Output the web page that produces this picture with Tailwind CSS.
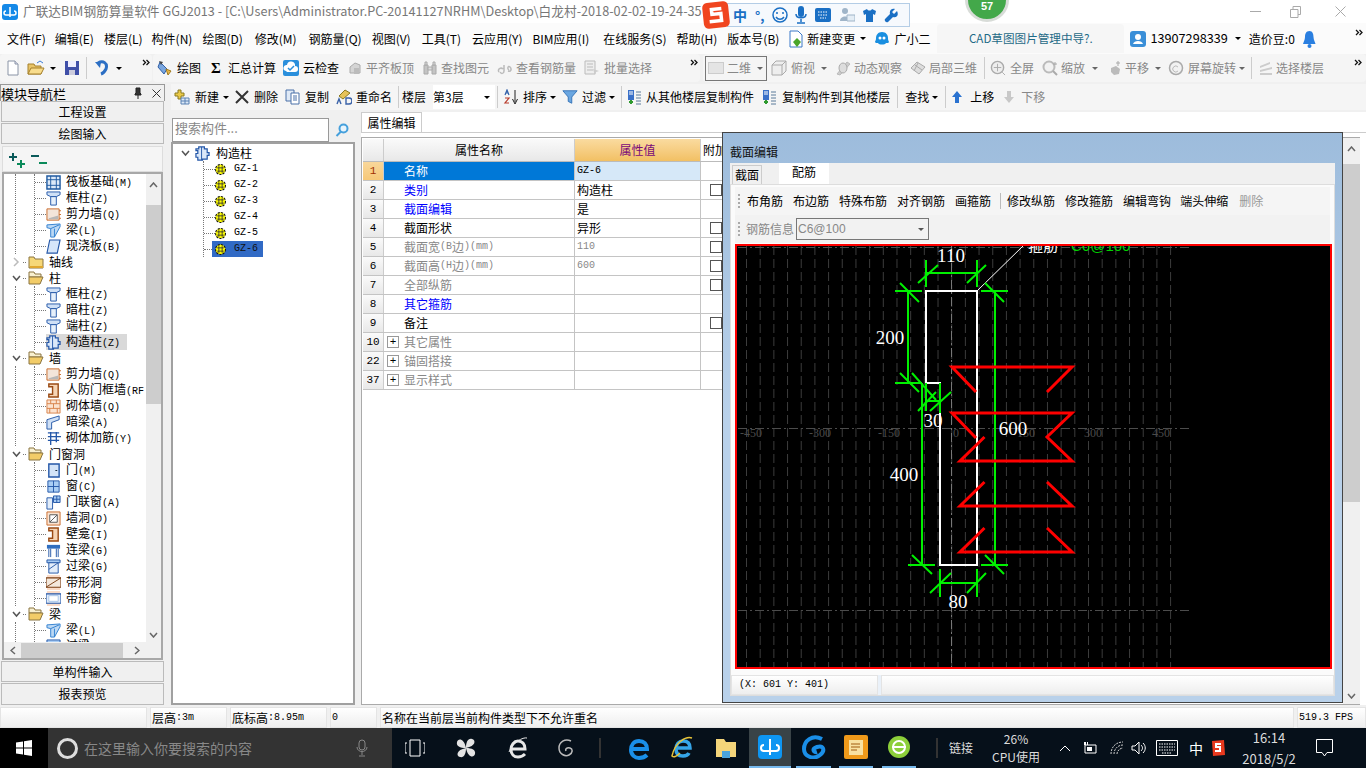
<!DOCTYPE html>
<html>
<head>
  <meta charset="utf-8">
  <title>广联达BIM钢筋算量软件 GGJ2013</title>
  <script src="https://cdn.jsdelivr.net/npm/@tailwindcss/browser@4"></script>
</head>
<body class="w-[1366px] h-[768px] overflow-hidden bg-[#f0f0f0] text-[12px] leading-none text-black font-['Noto_Sans_CJK_SC','Liberation_Sans',sans-serif]">

<!-- icon sprites -->
<svg class="hidden">
  <symbol id="doc" viewBox="0 0 16 16"><path d="M3 1h7l3 3v11H3z" fill="#fff" stroke="#8a94a6"/><path d="M10 1v3h3" fill="#dde" stroke="#8a94a6"/></symbol>
  <symbol id="open" viewBox="0 0 18 16"><path d="M1 4h6l1 2h6v8H1z" fill="#e8c468" stroke="#a5802c"/><path d="M4 8h13l-3 6H1z" fill="#f8dc8c" stroke="#a5802c"/><path d="M10 3l3-2 3 2" fill="none" stroke="#3a7bd5"/></symbol>
  <symbol id="save" viewBox="0 0 16 16"><path d="M1 1h14v14H1z" fill="#3f4fa8"/><path d="M4 1h8v6H4z" fill="#eef"/><path d="M5 10h6v5H5z" fill="#ccd"/></symbol>
  <symbol id="undo" viewBox="0 0 16 16"><path d="M4 3c5-3 10 0 8 6-1 2-2 4-5 5" fill="none" stroke="#2c6fc4" stroke-width="3"/><path d="M1 2l6 0-1 6z" fill="#2c6fc4"/></symbol>
  <symbol id="draw" viewBox="0 0 16 16"><path d="M3 2l7 7-3 5-6-7z" fill="#7aa6de" stroke="#2f5fa8"/><path d="M9 9l5 2-3 4z" fill="#e8b84a" stroke="#a07a20"/><path d="M2 1l4 1-2 3z" fill="#444"/></symbol>
  <symbol id="cloud" viewBox="0 0 16 16"><rect width="16" height="16" rx="2" fill="#2a8fdc"/><path d="M3 11a3 3 0 0 1 1-6 4 4 0 0 1 8 1 3 3 0 0 1 0 6H4z" fill="#fff"/><path d="M5 8l2 2 4-4" fill="none" stroke="#2a8fdc" stroke-width="1.5"/></symbol>
  <symbol id="grayblock" viewBox="0 0 16 16"><path d="M3 13V7l5-4 5 2v8z" fill="#d4d4d4" stroke="#aaa"/><path d="M7 8h5v6H7z" fill="#bbb"/></symbol>
  <symbol id="binoc" viewBox="0 0 16 16"><path d="M2 5h4v9H2zM10 5h4v9h-4z" fill="#c4c4c4" stroke="#aaa"/><path d="M6 7h4v3H6zM3 2h2v3H3zM11 2h2v3h-2z" fill="#ddd" stroke="#aaa"/></symbol>
  <symbol id="rebar" viewBox="0 0 16 16"><path d="M2 12c-2-3 2-5 4-3M7 5v6c0 3-3 3-4 1M11 11c3 1 4-2 2-4s-3 2-1 3" fill="none" stroke="#bbb" stroke-width="1.5"/></symbol>
  <symbol id="batch" viewBox="0 0 16 16"><path d="M1 1h10v13H1z" fill="#eee" stroke="#bbb"/><path d="M3 4h6M3 7h6M3 10h6" stroke="#bbb"/><path d="M9 9l6 2-3 1-1 3z" fill="#ccc"/></symbol>
  <symbol id="cube" viewBox="0 0 16 16"><path d="M1 5l4-4h10v10l-4 4H1z" fill="#eee" stroke="#aaa"/><path d="M1 5h10v10M11 5l4-4" fill="none" stroke="#aaa"/></symbol>
  <symbol id="orbit" viewBox="0 0 16 16"><path d="M2 14L12 2l3 2L5 15z" fill="#ccc" stroke="#bbb"/><ellipse cx="8" cy="8" rx="4" ry="5" fill="#ddd" stroke="#aaa"/></symbol>
  <symbol id="part3d" viewBox="0 0 16 16"><path d="M1 8l6-6 8 5-6 7z" fill="#ddd" stroke="#aaa"/><path d="M5 5l7 5M8 3l-4 8" stroke="#aaa"/></symbol>
  <symbol id="zoom" viewBox="0 0 17 17"><circle cx="8" cy="8" r="6.5" fill="#eee" stroke="#aaa" stroke-width="1.5"/><path d="M4 8h8M8 4v8M13 13l3 3" stroke="#aaa"/></symbol>
  <symbol id="zoom2" viewBox="0 0 16 16"><circle cx="7" cy="7" r="5.5" fill="#f2f2f2" stroke="#bbb" stroke-width="2"/><path d="M11 11l4 4" stroke="#aaa" stroke-width="2"/><path d="M13 2v3M11 4h4" stroke="#aaa"/></symbol>
  <symbol id="pan" viewBox="0 0 16 16"><path d="M4 8l5-2 4 3-1 5-5 1-3-3z" fill="#bbb"/><path d="M11 1v5M9 3h4" stroke="#aaa"/></symbol>
  <symbol id="rotate" viewBox="0 0 16 16"><circle cx="8" cy="8" r="6.5" fill="#f2f2f2" stroke="#aaa" stroke-width="1.5"/><path d="M10 7a3 3 0 1 0 0 4" fill="none" stroke="#bbb"/></symbol>
  <symbol id="layers" viewBox="0 0 16 16"><path d="M2 6l10-4v2L2 8zM2 10l12-3v2L2 12zM2 13h12v2H2z" fill="#ccc"/></symbol>
  <symbol id="newc" viewBox="0 0 16 16"><path d="M1 4h3V1h3v3h3v3H7v3H4V7H1z" fill="#eac948" stroke="#8a7a20"/><path d="M7 9h8v6H7z" fill="#dce8f6" stroke="#5a82b4"/><path d="M7 12h8M11 9v6" stroke="#5a82b4"/></symbol>
  <symbol id="copy" viewBox="0 0 16 16"><path d="M1 1h8v11H1z" fill="#dfe9f6" stroke="#4a70a8"/><path d="M6 4h8v11H6z" fill="#fff" stroke="#4a70a8"/><path d="M8 7h4M8 9h4M8 11h4" stroke="#4a70a8"/></symbol>
  <symbol id="rename" viewBox="0 0 16 16"><path d="M3 7l6-6 5 3-7 6z" fill="#e6c35a" stroke="#8a7a20"/><path d="M1 15l2-5 2 5M10 15V9h3a2 2 0 0 1 0 6z" fill="none" stroke="#3a62a8" stroke-width="1.4"/></symbol>
  <symbol id="sort" viewBox="0 0 16 16"><path d="M2 6l2-5 2 5M3 4h2" fill="none" stroke="#2f5fa8" stroke-width="1.2"/><path d="M2 9h4l-4 5h4" fill="none" stroke="#b83a2a" stroke-width="1.2"/><path d="M12 1v12M9.500 10l2.500 5 2.500-5" fill="none" stroke="#222"/></symbol>
  <symbol id="filter" viewBox="0 0 18 16"><path d="M1 1h16l-6 7v7l-4-2V8z" fill="#6aa6e0" stroke="#2f6fb4"/></symbol>
  <symbol id="floorcopy" viewBox="0 0 16 16"><path d="M2 1h6v10H2z" fill="#3a70c8"/><path d="M3 3h4M3 5h4" stroke="#fff"/><path d="M5 11v4M3 13h4" stroke="#2f9a2f" stroke-width="2"/><path d="M10 3h5M10 6h5M10 9h5M10 12h5M10 15h5" stroke="#5a7a9a"/></symbol>
  <symbol id="up" viewBox="0 0 12 14"><path d="M6 1l5 6H8v6H4V7H1z" fill="#2a72d0"/></symbol>
  <symbol id="down" viewBox="0 0 12 14"><path d="M6 13L1 7h3V1h4v6h3z" fill="#c8c8c8"/></symbol>
  <symbol id="col" viewBox="0 0 16 16"><path d="M1 1h14v3l-4 2H5L1 4z" fill="#cfe0f6" stroke="#2457a8"/><path d="M5 6h6v9H5z" fill="#e6f0fb" stroke="#2457a8"/></symbol>
  <symbol id="raft" viewBox="0 0 16 16"><path d="M1 1h14v14H1z" fill="#dce9f8" stroke="#1f5aa0" stroke-width="1.500"/><path d="M5 1v14M11 1v14M1 5h14M1 11h14" stroke="#1f5aa0"/></symbol>
  <symbol id="wall" viewBox="0 0 16 16"><path d="M1 2h13v12H1z" fill="#f3e5da" stroke="#c96a2a"/><path d="M3 12l10-3v4H3z" fill="#b8b8b8"/><path d="M14 4h2M14 8h2M14 12h2" stroke="#c96a2a"/></symbol>
  <symbol id="beam" viewBox="0 0 16 16"><path d="M1 2l14-1v3L9 15H5V6L1 5z" fill="#bcd8f4" stroke="#2f7fd0"/><path d="M5 6l9-4M9 6v9" stroke="#2f7fd0"/></symbol>
  <symbol id="slab" viewBox="0 0 16 16"><path d="M4 1h11l-3 14H1z" fill="#d6e6fa" stroke="#2457a8" stroke-width="1.200"/></symbol>
  <symbol id="gz" viewBox="0 0 16 16"><path d="M4 1h6v2h3v4h2v3h-2v4H8v1H3v-3H1V8h2V5H1V3h3z" fill="#dbe8f9" stroke="#2457a8" stroke-width="1.300"/><path d="M7 1v14" stroke="#2457a8"/></symbol>
  <symbol id="rfwall" viewBox="0 0 16 16"><path d="M3 1h10v14H3v-3h4V4H3z" fill="#f6d4b4" stroke="#9a4a14" stroke-width="1.500"/></symbol>
  <symbol id="brick" viewBox="0 0 16 16"><path d="M1 1h14v14H1z" fill="#fbe3d0" stroke="#d8824a"/><path d="M1 5h14M1 10h14M5 1v4M11 1v4M8 5v5M4 10v5M12 10v5" stroke="#d8824a"/></symbol>
  <symbol id="hbeam" viewBox="0 0 16 16"><path d="M1 5l13-4v4L6 8v7H1z" fill="#cfe0f6" stroke="#2457a8"/></symbol>
  <symbol id="jin" viewBox="0 0 16 16"><path d="M2 2h12M2 6h14M2 10h12M5 1v14M11 1v11" fill="none" stroke="#2457a8" stroke-width="1.400"/></symbol>
  <symbol id="door" viewBox="0 0 16 16"><path d="M3 1h11v14H3z" fill="#d4e4f8" stroke="#2457a8" stroke-width="1.500"/><path d="M10 8h2" stroke="#123"/></symbol>
  <symbol id="win" viewBox="0 0 16 16"><path d="M2 2h12v12H2z" fill="#a9cdf4" stroke="#2457a8"/><path d="M8 2v12M2 8h12" stroke="#2457a8"/></symbol>
  <symbol id="doorwin" viewBox="0 0 16 16"><path d="M1 3h6v12H1z" fill="#e2edfa" stroke="#2457a8"/><path d="M8 1h7v7H8z" fill="#a9cdf4" stroke="#2457a8"/><path d="M11.500 1v7M8 4.500h7" stroke="#2457a8"/></symbol>
  <symbol id="hole" viewBox="0 0 16 16"><path d="M1 1h14v14H1z" fill="#fbe3d0" stroke="#c96a2a"/><path d="M4 4h8v8H4z" fill="#fff" stroke="#555"/><path d="M4 12l8-8" stroke="#555"/></symbol>
  <symbol id="lbeam" viewBox="0 0 16 16"><path d="M1 2h14v4H1z" fill="#2f6ec0"/><path d="M3 6v9M5 6v9M11 6v9M13 6v9" stroke="#2457a8"/></symbol>
  <symbol id="gbeam" viewBox="0 0 16 16"><path d="M1 1h14v3H1z" fill="#a9cdf4" stroke="#2457a8"/><path d="M3 4h10v11H3z" fill="#e2edfa" stroke="#2457a8"/><path d="M3 11l10-7" stroke="#2457a8"/></symbol>
  <symbol id="strip" viewBox="0 0 16 16"><path d="M1 0h14v16H1z" fill="#fbdcc8"/><path d="M0 3h16v10H0z" fill="#f4e8dc" stroke="#7a3c10" stroke-width="1.200"/><path d="M0 13l16-10" stroke="#7a3c10"/></symbol>
  <symbol id="stripw" viewBox="0 0 16 16"><path d="M1 0h14v16H1z" fill="#fbdcc8"/><path d="M0 3h16v10H0z" fill="#e2edfa" stroke="#2457a8" stroke-width="1.200"/><path d="M3 5h10v6H3z" fill="#fff" stroke="#a9c4e8"/></symbol>
  <symbol id="gear" viewBox="0 0 10 10"><circle cx="5" cy="5" r="4.500" fill="#ffff00" stroke="#111" stroke-dasharray="2 1"/><path d="M2 3.500h6M2 6.500h6M3.500 2v6M6.500 2v6" stroke="#333" stroke-width=".8"/></symbol>
  <symbol id="folder" viewBox="0 0 16 14"><path d="M1 2h5l1 2h8v9H1z" fill="#f6d878" stroke="#8a7440"/><path d="M2 11h13v2H2z" fill="#e0a830"/></symbol>
  <symbol id="folderopen" viewBox="0 0 16 14"><path d="M1 1h5l1 2h6v3H1z" fill="#f8f0d0" stroke="#8a7440"/><path d="M1 13V6h14l-3 7z" fill="#f2cc68" stroke="#8a7440"/></symbol>
  <symbol id="chev2" viewBox="0 0 8 7"><path d="M1 1l2.500 2.500L1 6M4.500 1L7 3.500 4.500 6" fill="none" stroke="#111" stroke-width="1.300"/></symbol>
</svg>

<!-- title bar -->
<header class="h-[23px] bg-white flex items-center text-[12.7px] text-[#777] whitespace-nowrap overflow-hidden">
  <svg class="w-4 h-4 ml-[2px]" viewBox="0 0 16 16"><rect width="16" height="16" rx="3" fill="#1489e8"/><path d="M8 3v8M4 7a2 2 0 0 0 0 4h8a2 2 0 0 0 0-4M8 11v2" fill="none" stroke="#fff" stroke-width="1.500"/></svg>
  <span class="ml-[5px]">广联达BIM钢筋算量软件 GGJ2013 - [C:\Users\Administrator.PC-20141127NRHM\Desktop\白龙村-2018-02-02-19-24-35</span>
  <div class="ml-auto flex items-center">
    <span class="w-[11px] border-t border-[#aaa]"></span>
    <svg class="ml-[29px] w-[11px] h-[12px]" viewBox="0 0 11 12"><path d="M.5 3.500h7.500v8H.5zM3 3.500V.5h7.500v8H8" fill="none" stroke="#aaa"/></svg>
    <svg class="ml-[34px] mr-[20px] w-[11px] h-[11px]" viewBox="0 0 11 11"><path d="M.5.5l10 10M10.500.5l-10 10" stroke="#aaa"/></svg>
  </div>
</header>

<!-- menu bar -->
<nav class="h-[31px] bg-[#fbfbfb] flex items-center pl-[7px] whitespace-nowrap">
  <span>文件(F)</span><span class="ml-[9px]">编辑(E)</span><span class="ml-[10px]">楼层(L)</span><span class="ml-[9px]">构件(N)</span><span class="ml-[10px]">绘图(D)</span><span class="ml-[12px]">修改(M)</span><span class="ml-[12px]">钢筋量(Q)</span><span class="ml-[10px]">视图(V)</span><span class="ml-[11px]">工具(T)</span><span class="ml-[11px]">云应用(Y)</span><span class="ml-[10px]">BIM应用(I)</span><span class="ml-[14px]">在线服务(S)</span><span class="ml-[10px]">帮助(H)</span><span class="ml-[10px]">版本号(B)</span>
  <svg class="ml-[9px] w-4 h-[18px]" viewBox="0 0 16 18"><path d="M2 1h8l4 4v12H2z" fill="#fff" stroke="#3a78c8"/><path d="M9 8l4 4-4 5-4-5z" fill="#4aa52a"/></svg>
  <span class="ml-[3px]">新建变更</span>
  <span class="ml-[5px] w-0 h-0 border-x-[3px] border-x-transparent border-t-[3px] border-t-black"></span>
  <svg class="ml-[8px] w-4 h-4" viewBox="0 0 16 16"><path d="M8 1c4 0 6 3 6 6s1 3 1 4-2 1-3 1c-1 2-7 2-8 0-1 0-3 0-3-1s1-1 1-4 2-6 6-6z" fill="#1a8fe0"/><circle cx="6" cy="7" r="1.500" fill="#fff"/><circle cx="10" cy="7" r="1.500" fill="#fff"/></svg>
  <span class="ml-[4px]">广小二</span>
  <div class="ml-[7px] w-[187px] h-[29px] bg-[#f6f6f6] rounded-t flex items-center justify-center text-[11.6px] text-[#1e6a86]">CAD草图图片管理中导?.</div>
  <svg class="ml-[6px] w-4 h-4" viewBox="0 0 16 16"><rect width="16" height="16" rx="3" fill="#3a8fd8"/><circle cx="8" cy="6" r="3" fill="#fff"/><path d="M3 13c1-4 9-4 10 0z" fill="#fff"/></svg>
  <span class="ml-[4px] text-[12.7px]">13907298339</span>
  <span class="ml-[7px] w-0 h-0 border-x-[3px] border-x-transparent border-t-[3px] border-t-black"></span>
  <span class="ml-[8px]">造价豆:0</span>
  <svg class="ml-[8px] w-[13px] h-[18px]" viewBox="0 0 13 18"><path d="M6.500 1c3 0 4 3 4 6s2 6 2 7H0c0-1 2-4 2-7s1-6 4.500-6z" fill="#2a7fe0"/><circle cx="6.500" cy="16" r="2" fill="#2a7fe0"/></svg>
  <svg class="ml-auto mr-[3px] -mt-3 w-2 h-[7px]"><use href="#chev2"/></svg>
</nav>

<!-- main toolbar -->
<div class="h-[28px] flex whitespace-nowrap text-[12px]">
  <div class="w-[152px] bg-[#f5f5f5] rounded flex items-center">
    <svg class="ml-[5px] w-4 h-4"><use href="#doc"/></svg>
    <svg class="ml-[6px] w-[18px] h-4"><use href="#open"/></svg>
    <span class="ml-[5px] w-0 h-0 border-x-[3px] border-x-transparent border-t-[3px] border-t-black"></span>
    <svg class="ml-[8px] w-4 h-4"><use href="#save"/></svg>
    <span class="ml-[6px] w-px h-[22px] bg-[#ccc]"></span>
    <svg class="ml-[7px] w-4 h-4"><use href="#undo"/></svg>
    <span class="ml-[6px] w-0 h-0 border-x-[3px] border-x-transparent border-t-[3px] border-t-black"></span>
    <svg class="ml-[20px] -mt-3 w-2 h-[7px]"><use href="#chev2"/></svg>
  </div>
  <div class="ml-px w-[547px] bg-[#f5f5f5] rounded flex items-center">
    <svg class="ml-[4px] w-4 h-4"><use href="#draw"/></svg><span class="ml-[4px]">绘图</span>
    <span class="ml-[10px] w-[9px] font-bold text-[15px] font-['Liberation_Serif',serif]">Σ</span><span class="ml-[8px]">汇总计算</span>
    <svg class="ml-[7px] w-4 h-4"><use href="#cloud"/></svg><span class="ml-[4px]">云检查</span>
    <svg class="ml-[8px] w-4 h-4"><use href="#grayblock"/></svg><span class="ml-[3px] text-[#888]">平齐板顶</span>
    <svg class="ml-[8px] w-4 h-4"><use href="#binoc"/></svg><span class="ml-[3px] text-[#888]">查找图元</span>
    <svg class="ml-[8px] w-4 h-4"><use href="#rebar"/></svg><span class="ml-[3px] text-[#888]">查看钢筋量</span>
    <svg class="ml-[8px] w-4 h-4"><use href="#batch"/></svg><span class="ml-[4px] text-[#888]">批量选择</span>
    <svg class="ml-[38px] -mt-3 w-2 h-[7px]"><use href="#chev2"/></svg>
  </div>
  <div class="ml-[3px] flex-1 bg-[#f5f5f5] rounded flex items-center text-[#888]">
    <div class="ml-[2px] w-[62px] h-[25px] border border-[#777] flex items-center pl-[2px]">
      <span class="w-4 h-[12px] bg-[#e4e4e4] border border-[#ccc]"></span><span class="ml-[3px]">二维</span>
      <span class="ml-auto mr-[3px] w-0 h-0 border-x-[3px] border-x-transparent border-t-[3px] border-t-[#666]"></span>
    </div>
    <svg class="ml-[4px] w-4 h-4"><use href="#cube"/></svg><span class="ml-[4px]">俯视</span>
    <span class="ml-[6px] w-0 h-0 border-x-[3px] border-x-transparent border-t-[3px] border-t-[#666]"></span>
    <svg class="ml-[8px] w-4 h-4"><use href="#orbit"/></svg><span class="ml-[3px]">动态观察</span>
    <svg class="ml-[8px] w-4 h-4"><use href="#part3d"/></svg><span class="ml-[3px]">局部三维</span>
    <span class="ml-[7px] w-px h-[22px] bg-[#ccc]"></span>
    <svg class="ml-[5px] w-4 h-4"><use href="#zoom"/></svg><span class="ml-[4px]">全屏</span>
    <svg class="ml-[8px] w-4 h-4"><use href="#zoom2"/></svg><span class="ml-[3px]">缩放</span>
    <span class="ml-[7px] w-0 h-0 border-x-[3px] border-x-transparent border-t-[3px] border-t-[#666]"></span>
    <svg class="ml-[9px] w-4 h-4"><use href="#pan"/></svg><span class="ml-[2px]">平移</span>
    <span class="ml-[6px] w-0 h-0 border-x-[3px] border-x-transparent border-t-[3px] border-t-[#666]"></span>
    <svg class="ml-[7px] w-4 h-4"><use href="#rotate"/></svg><span class="ml-[4px]">屏幕旋转</span>
    <span class="ml-[3px] w-0 h-0 border-x-[3px] border-x-transparent border-t-[3px] border-t-[#666]"></span>
    <span class="ml-[6px] w-px h-[22px] bg-[#ccc]"></span>
    <svg class="ml-[6px] w-4 h-4"><use href="#layers"/></svg><span class="ml-[2px]">选择楼层</span>
    <svg class="ml-[30px] -mt-3 w-2 h-[7px]"><use href="#chev2"/></svg>
  </div>
</div>

<!-- work area -->
<main class="h-[621px] mt-[2px] flex">
  <!-- module navigator -->
  <aside class="w-[165px] flex flex-col">
    <div class="h-[17px] flex items-center border border-[#999] border-b-0 bg-[#f0f0f0] text-[13px]">
      <span>模块导航栏</span>
      <svg class="ml-auto w-[10px] h-3" viewBox="0 0 10 12"><path d="M3 1h4v5l1 1v1H2V7l1-1zM5 8v4" fill="#333" stroke="#222"/></svg>
      <svg class="ml-[9px] mr-[3px] w-[9px] h-[9px]" viewBox="0 0 9 9"><path d="M.5.5l8 8M8.500.5l-8 8" stroke="#333"/></svg>
    </div>
    <div class="h-[21px] mx-px border border-[#bbb] bg-[#f0f0f0] flex items-center justify-center text-[12px]">工程设置</div>
    <div class="h-[21px] mx-px mt-px border border-[#bbb] bg-[#f0f0f0] flex items-center justify-center text-[12px]">绘图输入</div>
    <div class="h-[26px] mx-[2px] mt-[2px] bg-[#f5f5f5] border border-[#ddd] flex items-center pl-[5px]">
      <svg class="w-[17px] h-[17px]" viewBox="0 0 17 17"><path d="M1 6h8M5 2v8" stroke="#0a5a5a" stroke-width="2"/><path d="M9 13h8M13 9v8" stroke="#0a8a5a" stroke-width="2"/></svg>
      <svg class="ml-[5px] w-[17px] h-[17px]" viewBox="0 0 17 17"><path d="M1 5h8" stroke="#0a5a5a" stroke-width="2"/><path d="M9 12h8" stroke="#0a8a5a" stroke-width="2"/></svg>
    </div>
    <div class="h-[488px] mx-[2px] border-2 border-[#a8a8a8] flex flex-col bg-[#f0f0f0]">
      <div class="h-[468px] flex">
        <div class="w-[143px] bg-white overflow-hidden whitespace-nowrap">
          <div class="ml-[11px] border-l border-dotted border-[#777]">
            <div class="ml-[18px] border-l border-dotted border-[#777]">
              <div class="h-4 flex items-center"><span class="w-[11px] border-t border-dotted border-[#777]"></span><svg class="w-[15px] h-[15px]"><use href="#raft"/></svg><span class="ml-[5px]">筏板基础<i class="not-italic font-['Liberation_Mono'] text-[10px]">(M)</i></span></div>
              <div class="h-4 flex items-center"><span class="w-[11px] border-t border-dotted border-[#777]"></span><svg class="w-[15px] h-[15px]"><use href="#col"/></svg><span class="ml-[5px]">框柱<i class="not-italic font-['Liberation_Mono'] text-[10px]">(Z)</i></span></div>
              <div class="h-4 flex items-center"><span class="w-[11px] border-t border-dotted border-[#777]"></span><svg class="w-[15px] h-[15px]"><use href="#wall"/></svg><span class="ml-[5px]">剪力墙<i class="not-italic font-['Liberation_Mono'] text-[10px]">(Q)</i></span></div>
              <div class="h-4 flex items-center"><span class="w-[11px] border-t border-dotted border-[#777]"></span><svg class="w-[15px] h-[15px]"><use href="#beam"/></svg><span class="ml-[5px]">梁<i class="not-italic font-['Liberation_Mono'] text-[10px]">(L)</i></span></div>
              <div class="h-4 flex items-center"><span class="w-[11px] border-t border-dotted border-[#777]"></span><svg class="w-[15px] h-[15px]"><use href="#slab"/></svg><span class="ml-[5px]">现浇板<i class="not-italic font-['Liberation_Mono'] text-[10px]">(B)</i></span></div>
            </div>
          </div>
          <div class="h-4 flex items-center pl-[8px]"><svg class="w-[8px] h-[10px]" viewBox="0 0 8 10"><path d="M2 1l4 4-4 4" fill="none" stroke="#bbb" stroke-width="1.500"/></svg><span class="ml-[3px] w-[3px] border-t border-dotted border-[#777]"></span><svg class="ml-[2px] w-4 h-[14px]"><use href="#folder"/></svg><span class="ml-[5px]">轴线</span></div>
          <div class="h-4 flex items-center pl-[8px]"><svg class="w-[9px] h-[8px]" viewBox="0 0 9 8"><path d="M1 2l3.500 4L8 2" fill="none" stroke="#555" stroke-width="1.500"/></svg><span class="ml-[2px] w-[3px] border-t border-dotted border-[#777]"></span><svg class="ml-[2px] w-4 h-[14px]"><use href="#folderopen"/></svg><span class="ml-[5px]">柱</span></div>
          <div class="ml-[11px] border-l border-dotted border-[#777]">
            <div class="ml-[18px] border-l border-dotted border-[#777]">
              <div class="h-4 flex items-center"><span class="w-[11px] border-t border-dotted border-[#777]"></span><svg class="w-[15px] h-[15px]"><use href="#col"/></svg><span class="ml-[5px]">框柱<i class="not-italic font-['Liberation_Mono'] text-[10px]">(Z)</i></span></div>
              <div class="h-4 flex items-center"><span class="w-[11px] border-t border-dotted border-[#777]"></span><svg class="w-[15px] h-[15px]"><use href="#col"/></svg><span class="ml-[5px]">暗柱<i class="not-italic font-['Liberation_Mono'] text-[10px]">(Z)</i></span></div>
              <div class="h-4 flex items-center"><span class="w-[11px] border-t border-dotted border-[#777]"></span><svg class="w-[15px] h-[15px]"><use href="#col"/></svg><span class="ml-[5px]">端柱<i class="not-italic font-['Liberation_Mono'] text-[10px]">(Z)</i></span></div>
              <div class="h-4 flex items-center"><span class="w-[11px] border-t border-dotted border-[#777]"></span><span class="flex items-center w-[81px] h-4 bg-[#d9d9d9]"><svg class="w-[15px] h-[15px]"><use href="#gz"/></svg><span class="ml-[5px]">构造柱<i class="not-italic font-['Liberation_Mono'] text-[10px]">(Z)</i></span></span></div>
            </div>
          </div>
          <div class="h-4 flex items-center pl-[8px]"><svg class="w-[9px] h-[8px]" viewBox="0 0 9 8"><path d="M1 2l3.500 4L8 2" fill="none" stroke="#555" stroke-width="1.500"/></svg><span class="ml-[2px] w-[3px] border-t border-dotted border-[#777]"></span><svg class="ml-[2px] w-4 h-[14px]"><use href="#folderopen"/></svg><span class="ml-[5px]">墙</span></div>
          <div class="ml-[11px] border-l border-dotted border-[#777]">
            <div class="ml-[18px] border-l border-dotted border-[#777]">
              <div class="h-4 flex items-center"><span class="w-[11px] border-t border-dotted border-[#777]"></span><svg class="w-[15px] h-[15px]"><use href="#wall"/></svg><span class="ml-[5px]">剪力墙<i class="not-italic font-['Liberation_Mono'] text-[10px]">(Q)</i></span></div>
              <div class="h-4 flex items-center"><span class="w-[11px] border-t border-dotted border-[#777]"></span><svg class="w-[15px] h-[15px]"><use href="#rfwall"/></svg><span class="ml-[5px]">人防门框墙<i class="not-italic font-['Liberation_Mono'] text-[10px]">(RF</i></span></div>
              <div class="h-4 flex items-center"><span class="w-[11px] border-t border-dotted border-[#777]"></span><svg class="w-[15px] h-[15px]"><use href="#brick"/></svg><span class="ml-[5px]">砌体墙<i class="not-italic font-['Liberation_Mono'] text-[10px]">(Q)</i></span></div>
              <div class="h-4 flex items-center"><span class="w-[11px] border-t border-dotted border-[#777]"></span><svg class="w-[15px] h-[15px]"><use href="#hbeam"/></svg><span class="ml-[5px]">暗梁<i class="not-italic font-['Liberation_Mono'] text-[10px]">(A)</i></span></div>
              <div class="h-4 flex items-center"><span class="w-[11px] border-t border-dotted border-[#777]"></span><svg class="w-[15px] h-[15px]"><use href="#jin"/></svg><span class="ml-[5px]">砌体加筋<i class="not-italic font-['Liberation_Mono'] text-[10px]">(Y)</i></span></div>
            </div>
          </div>
          <div class="h-4 flex items-center pl-[8px]"><svg class="w-[9px] h-[8px]" viewBox="0 0 9 8"><path d="M1 2l3.500 4L8 2" fill="none" stroke="#555" stroke-width="1.500"/></svg><span class="ml-[2px] w-[3px] border-t border-dotted border-[#777]"></span><svg class="ml-[2px] w-4 h-[14px]"><use href="#folderopen"/></svg><span class="ml-[5px]">门窗洞</span></div>
          <div class="ml-[11px] border-l border-dotted border-[#777]">
            <div class="ml-[18px] border-l border-dotted border-[#777]">
              <div class="h-4 flex items-center"><span class="w-[11px] border-t border-dotted border-[#777]"></span><svg class="w-[15px] h-[15px]"><use href="#door"/></svg><span class="ml-[5px]">门<i class="not-italic font-['Liberation_Mono'] text-[10px]">(M)</i></span></div>
              <div class="h-4 flex items-center"><span class="w-[11px] border-t border-dotted border-[#777]"></span><svg class="w-[15px] h-[15px]"><use href="#win"/></svg><span class="ml-[5px]">窗<i class="not-italic font-['Liberation_Mono'] text-[10px]">(C)</i></span></div>
              <div class="h-4 flex items-center"><span class="w-[11px] border-t border-dotted border-[#777]"></span><svg class="w-[15px] h-[15px]"><use href="#doorwin"/></svg><span class="ml-[5px]">门联窗<i class="not-italic font-['Liberation_Mono'] text-[10px]">(A)</i></span></div>
              <div class="h-4 flex items-center"><span class="w-[11px] border-t border-dotted border-[#777]"></span><svg class="w-[15px] h-[15px]"><use href="#hole"/></svg><span class="ml-[5px]">墙洞<i class="not-italic font-['Liberation_Mono'] text-[10px]">(D)</i></span></div>
              <div class="h-4 flex items-center"><span class="w-[11px] border-t border-dotted border-[#777]"></span><svg class="w-[15px] h-[15px]"><use href="#rfwall"/></svg><span class="ml-[5px]">壁龛<i class="not-italic font-['Liberation_Mono'] text-[10px]">(I)</i></span></div>
              <div class="h-4 flex items-center"><span class="w-[11px] border-t border-dotted border-[#777]"></span><svg class="w-[15px] h-[15px]"><use href="#lbeam"/></svg><span class="ml-[5px]">连梁<i class="not-italic font-['Liberation_Mono'] text-[10px]">(G)</i></span></div>
              <div class="h-4 flex items-center"><span class="w-[11px] border-t border-dotted border-[#777]"></span><svg class="w-[15px] h-[15px]"><use href="#gbeam"/></svg><span class="ml-[5px]">过梁<i class="not-italic font-['Liberation_Mono'] text-[10px]">(G)</i></span></div>
              <div class="h-4 flex items-center"><span class="w-[11px] border-t border-dotted border-[#777]"></span><svg class="w-[15px] h-[15px]"><use href="#strip"/></svg><span class="ml-[5px]">带形洞</span></div>
              <div class="h-4 flex items-center"><span class="w-[11px] border-t border-dotted border-[#777]"></span><svg class="w-[15px] h-[15px]"><use href="#stripw"/></svg><span class="ml-[5px]">带形窗</span></div>
            </div>
          </div>
          <div class="h-4 flex items-center pl-[8px]"><svg class="w-[9px] h-[8px]" viewBox="0 0 9 8"><path d="M1 2l3.500 4L8 2" fill="none" stroke="#555" stroke-width="1.500"/></svg><span class="ml-[2px] w-[3px] border-t border-dotted border-[#777]"></span><svg class="ml-[2px] w-4 h-[14px]"><use href="#folderopen"/></svg><span class="ml-[5px]">梁</span></div>
          <div class="ml-[11px] border-l border-dotted border-[#777]">
            <div class="ml-[18px] border-l border-dotted border-[#777]">
              <div class="h-4 flex items-center"><span class="w-[11px] border-t border-dotted border-[#777]"></span><svg class="w-[15px] h-[15px]"><use href="#beam"/></svg><span class="ml-[5px]">梁<i class="not-italic font-['Liberation_Mono'] text-[10px]">(L)</i></span></div>
              <div class="h-4 flex items-center"><span class="w-[11px] border-t border-dotted border-[#777]"></span><svg class="w-[15px] h-[15px]"><use href="#gbeam"/></svg><span class="ml-[5px]">过梁<i class="not-italic font-['Liberation_Mono'] text-[10px]">(G)</i></span></div>
            </div>
          </div>
        </div>
        <!-- vertical scrollbar -->
        <div class="w-[15px] flex flex-col items-center bg-[#f0f0f0]">
          <svg class="mt-[8px] w-[9px] h-[6px]" viewBox="0 0 9 6"><path d="M1 5l3.500-4L8 5" fill="none" stroke="#666" stroke-width="1.500"/></svg>
          <div class="mt-[17px] w-full h-[199px] bg-[#cdcdcd]"></div>
          <svg class="mt-auto mb-[4px] w-[9px] h-[6px]" viewBox="0 0 9 6"><path d="M1 1l3.500 4L8 1" fill="none" stroke="#666" stroke-width="1.500"/></svg>
        </div>
      </div>
      <!-- horizontal scrollbar -->
      <div class="h-[16px] flex items-center bg-[#f0f0f0]">
        <svg class="ml-[6px] w-[6px] h-[9px]" viewBox="0 0 6 9"><path d="M5 1L1 4.500 5 8" fill="none" stroke="#666" stroke-width="1.500"/></svg>
        <div class="ml-[5px] w-[102px] h-[15px] bg-[#cdcdcd]"></div>
        <svg class="ml-[11px] w-[6px] h-[9px]" viewBox="0 0 6 9"><path d="M1 1l4 3.500L1 8" fill="none" stroke="#666" stroke-width="1.500"/></svg>
      </div>
    </div>
    <div class="h-[21px] mx-px mt-px border border-[#bbb] bg-[#f0f0f0] flex items-center justify-center">单构件输入</div>
    <div class="h-[22px] mx-px mt-px border border-[#bbb] bg-[#f0f0f0] flex items-center justify-center">报表预览</div>
  </aside>

  <div class="ml-[6px] flex-1 flex flex-col">
    <!-- second toolbar -->
    <div class="h-[26px] bg-[#f5f5f5] flex items-center whitespace-nowrap">
      <svg class="ml-[3px] w-4 h-4"><use href="#newc"/></svg><span class="ml-[5px]">新建</span>
      <span class="ml-[4px] w-0 h-0 border-x-[3px] border-x-transparent border-t-[3px] border-t-black"></span>
      <svg class="ml-[6px] w-[14px] h-[14px]" viewBox="0 0 14 14"><path d="M1 1l12 12M13 1L1 13" stroke="#333" stroke-width="2"/></svg><span class="ml-[5px]">删除</span>
      <svg class="ml-[7px] w-4 h-4"><use href="#copy"/></svg><span class="ml-[4px]">复制</span>
      <svg class="ml-[7px] w-4 h-4"><use href="#rename"/></svg><span class="ml-[4px]">重命名</span>
      <span class="ml-[6px] w-px h-[22px] bg-[#ccc]"></span>
      <span class="ml-[3px]">楼层</span>
      <div class="ml-[7px] w-[62px] h-[24px] bg-white flex items-center"><span>第3层</span><span class="ml-auto mr-[5px] w-0 h-0 border-x-[3px] border-x-transparent border-t-[3px] border-t-black"></span></div>
      <span class="ml-[2px] w-px h-[22px] bg-[#ccc]"></span>
      <svg class="ml-[5px] w-4 h-4"><use href="#sort"/></svg><span class="ml-[4px]">排序</span>
      <span class="ml-[3px] w-0 h-0 border-x-[3px] border-x-transparent border-t-[3px] border-t-black"></span>
      <svg class="ml-[6px] w-4 h-4"><use href="#filter"/></svg><span class="ml-[4px]">过滤</span>
      <span class="ml-[3px] w-0 h-0 border-x-[3px] border-x-transparent border-t-[3px] border-t-black"></span>
      <span class="ml-[6px] w-px h-[22px] bg-[#ccc]"></span>
      <svg class="ml-[4px] w-4 h-4"><use href="#floorcopy"/></svg><span class="ml-[4px]">从其他楼层复制构件</span>
      <svg class="ml-[7px] w-4 h-4"><use href="#floorcopy"/></svg><span class="ml-[5px]">复制构件到其他楼层</span>
      <span class="ml-[7px] w-px h-[22px] bg-[#ccc]"></span>
      <span class="ml-[7px]">查找</span>
      <span class="ml-[3px] w-0 h-0 border-x-[3px] border-x-transparent border-t-[3px] border-t-black"></span>
      <span class="ml-[7px] w-px h-[22px] bg-[#ccc]"></span>
      <svg class="ml-[5px] w-3 h-[14px]"><use href="#up"/></svg><span class="ml-[7px]">上移</span>
      <svg class="ml-[9px] w-3 h-[14px]"><use href="#down"/></svg><span class="ml-[6px] text-[#888]">下移</span>
    </div>

    <div class="flex-1 flex">
      <!-- component tree -->
      <section class="w-[184px] pt-[7px] flex flex-col">
        <div class="h-[25px] flex items-center">
          <div class="ml-px w-[157px] h-[24px] bg-white border border-[#999] flex items-center pl-[2px] pb-[4px] text-[13px] text-[#888]">搜索构件...</div>
          <svg class="ml-[6px] w-[14px] h-[14px]" viewBox="0 0 14 14"><circle cx="8.500" cy="5.500" r="4" fill="#e8f4fc" stroke="#46a0dc" stroke-width="2"/><path d="M6 8.500L1.500 13" stroke="#46a0dc" stroke-width="2"/></svg>
        </div>
        <div class="flex-1 bg-white border-2 border-[#a0a0a0] pt-[1px] pl-[7px] whitespace-nowrap">
          <div class="h-4 flex items-center"><svg class="ml-[1px] w-[9px] h-[8px]" viewBox="0 0 9 8"><path d="M1 2l3.500 4L8 2" fill="none" stroke="#555" stroke-width="1.500"/></svg><svg class="ml-[5px] w-[15px] h-[15px]"><use href="#gz"/></svg><span class="ml-[6px] text-[12px]">构造柱</span></div>
          <div class="ml-[23px] border-l border-dotted border-[#777]">
            <div class="h-4 flex items-center"><span class="w-[11px] border-t border-dotted border-[#777]"></span><svg class="w-[11px] h-[11px]"><use href="#gear"/></svg><span class="ml-[8px] text-[10px] font-['Liberation_Mono']">GZ-1</span></div>
            <div class="h-4 flex items-center"><span class="w-[11px] border-t border-dotted border-[#777]"></span><svg class="w-[11px] h-[11px]"><use href="#gear"/></svg><span class="ml-[8px] text-[10px] font-['Liberation_Mono']">GZ-2</span></div>
            <div class="h-4 flex items-center"><span class="w-[11px] border-t border-dotted border-[#777]"></span><svg class="w-[11px] h-[11px]"><use href="#gear"/></svg><span class="ml-[8px] text-[10px] font-['Liberation_Mono']">GZ-3</span></div>
            <div class="h-4 flex items-center"><span class="w-[11px] border-t border-dotted border-[#777]"></span><svg class="w-[11px] h-[11px]"><use href="#gear"/></svg><span class="ml-[8px] text-[10px] font-['Liberation_Mono']">GZ-4</span></div>
            <div class="h-4 flex items-center"><span class="w-[11px] border-t border-dotted border-[#777]"></span><svg class="w-[11px] h-[11px]"><use href="#gear"/></svg><span class="ml-[8px] text-[10px] font-['Liberation_Mono']">GZ-5</span></div>
            <div class="h-4 flex items-center"><span class="w-[8px] border-t border-dotted border-[#777]"></span><span class="w-[51px] h-4 bg-[#316ac5] flex items-center pl-[3px]"><svg class="w-[11px] h-[11px]"><use href="#gear"/></svg><span class="ml-[8px] text-[10px] font-['Liberation_Mono'] text-[#111]">GZ-6</span></span></div>
          </div>
        </div>
      </section>

      <!-- property editor -->
      <section class="ml-[6px] flex-1 flex flex-col bg-white">
        <div class="h-[2px] bg-[#f0f0f0]"></div>
        <div class="h-[21px] flex border-b border-[#ccc]"><div class="w-[61px] bg-white border border-b-0 border-[#ccc] flex items-center justify-center text-[12px]">属性编辑</div></div>
        <div class="flex-1 mt-[4px] mr-[6px] border border-[#aaa] border-r-0 bg-white flex overflow-hidden">
          <div class="flex-1 pt-px pl-px">
            <div class="flex h-[23px] border-b border-[#bbb] text-[12px]">
              <div class="w-[21px] bg-linear-to-b from-[#fafafa] to-[#e8e8e8] border-r border-[#ccc]"></div>
              <div class="w-[191px] bg-linear-to-b from-[#fafafa] to-[#e8e8e8] border-r border-[#ccc] flex items-center justify-center">属性名称</div>
              <div class="w-[126px] bg-linear-to-b from-[#fadb9f] to-[#f2c063] border-r border-[#ccc] flex items-center justify-center text-[#7a0a7a]">属性值</div>
              <div class="flex-1 flex items-center pl-[2px]">附加</div>
            </div>
            <div class="flex h-[19px] border-b border-[#c4c4c4]"><div class="w-[21px] bg-linear-to-b from-[#f9d79a] to-[#f6c878] border-r border-[#ccc] flex items-center justify-center text-[11px] font-['Liberation_Mono'] text-[#a03000]">1</div><div class="w-[191px] bg-[#0078d7] text-white border-r border-[#c4c4c4] flex items-center pl-[20px]">名称</div><div class="w-[126px] bg-[#d6e8f8] border-r border-[#c4c4c4] flex items-center pl-[2px] font-['Liberation_Mono'] text-[10px]">GZ-6</div><div class="flex-1"></div></div>
            <div class="flex h-[19px] border-b border-[#c4c4c4]"><div class="w-[21px] bg-linear-to-b from-[#fafafa] to-[#e8e8e8] border-r border-[#ccc] flex items-center justify-center text-[11px] font-['Liberation_Mono']">2</div><div class="w-[191px] text-[#0000ff] border-r border-[#c4c4c4] flex items-center pl-[20px]">类别</div><div class="w-[126px] border-r border-[#c4c4c4] flex items-center pl-[2px]">构造柱</div><div class="flex-1 flex items-center pl-[9px]"><span class="w-3 h-3 shrink-0 border border-[#555]"></span></div></div>
            <div class="flex h-[19px] border-b border-[#c4c4c4]"><div class="w-[21px] bg-linear-to-b from-[#fafafa] to-[#e8e8e8] border-r border-[#ccc] flex items-center justify-center text-[11px] font-['Liberation_Mono']">3</div><div class="w-[191px] text-[#0000ff] border-r border-[#c4c4c4] flex items-center pl-[20px]">截面编辑</div><div class="w-[126px] border-r border-[#c4c4c4] flex items-center pl-[2px]">是</div><div class="flex-1"></div></div>
            <div class="flex h-[19px] border-b border-[#c4c4c4]"><div class="w-[21px] bg-linear-to-b from-[#fafafa] to-[#e8e8e8] border-r border-[#ccc] flex items-center justify-center text-[11px] font-['Liberation_Mono']">4</div><div class="w-[191px] border-r border-[#c4c4c4] flex items-center pl-[20px]">截面形状</div><div class="w-[126px] border-r border-[#c4c4c4] flex items-center pl-[2px]">异形</div><div class="flex-1 flex items-center pl-[9px]"><span class="w-3 h-3 shrink-0 border border-[#555]"></span></div></div>
            <div class="flex h-[19px] border-b border-[#c4c4c4]"><div class="w-[21px] bg-linear-to-b from-[#fafafa] to-[#e8e8e8] border-r border-[#ccc] flex items-center justify-center text-[11px] font-['Liberation_Mono']">5</div><div class="w-[191px] text-[#888] border-r border-[#c4c4c4] flex items-center pl-[20px]">截面宽<i class="not-italic font-['Liberation_Mono'] text-[10px]">(B</i>边<i class="not-italic font-['Liberation_Mono'] text-[10px]">)(mm)</i></div><div class="w-[126px] text-[#888] border-r border-[#c4c4c4] flex items-center pl-[2px] font-['Liberation_Mono'] text-[10px]">110</div><div class="flex-1 flex items-center pl-[9px]"><span class="w-3 h-3 shrink-0 border border-[#555]"></span></div></div>
            <div class="flex h-[19px] border-b border-[#c4c4c4]"><div class="w-[21px] bg-linear-to-b from-[#fafafa] to-[#e8e8e8] border-r border-[#ccc] flex items-center justify-center text-[11px] font-['Liberation_Mono']">6</div><div class="w-[191px] text-[#888] border-r border-[#c4c4c4] flex items-center pl-[20px]">截面高<i class="not-italic font-['Liberation_Mono'] text-[10px]">(H</i>边<i class="not-italic font-['Liberation_Mono'] text-[10px]">)(mm)</i></div><div class="w-[126px] text-[#888] border-r border-[#c4c4c4] flex items-center pl-[2px] font-['Liberation_Mono'] text-[10px]">600</div><div class="flex-1 flex items-center pl-[9px]"><span class="w-3 h-3 shrink-0 border border-[#555]"></span></div></div>
            <div class="flex h-[19px] border-b border-[#c4c4c4]"><div class="w-[21px] bg-linear-to-b from-[#fafafa] to-[#e8e8e8] border-r border-[#ccc] flex items-center justify-center text-[11px] font-['Liberation_Mono']">7</div><div class="w-[191px] text-[#888] border-r border-[#c4c4c4] flex items-center pl-[20px]">全部纵筋</div><div class="w-[126px] border-r border-[#c4c4c4]"></div><div class="flex-1 flex items-center pl-[9px]"><span class="w-3 h-3 shrink-0 border border-[#555]"></span></div></div>
            <div class="flex h-[19px] border-b border-[#c4c4c4]"><div class="w-[21px] bg-linear-to-b from-[#fafafa] to-[#e8e8e8] border-r border-[#ccc] flex items-center justify-center text-[11px] font-['Liberation_Mono']">8</div><div class="w-[191px] text-[#0000ff] border-r border-[#c4c4c4] flex items-center pl-[20px]">其它箍筋</div><div class="w-[126px] border-r border-[#c4c4c4]"></div><div class="flex-1"></div></div>
            <div class="flex h-[19px] border-b border-[#c4c4c4]"><div class="w-[21px] bg-linear-to-b from-[#fafafa] to-[#e8e8e8] border-r border-[#ccc] flex items-center justify-center text-[11px] font-['Liberation_Mono']">9</div><div class="w-[191px] border-r border-[#c4c4c4] flex items-center pl-[20px]">备注</div><div class="w-[126px] border-r border-[#c4c4c4]"></div><div class="flex-1 flex items-center pl-[9px]"><span class="w-3 h-3 shrink-0 border border-[#555]"></span></div></div>
            <div class="flex h-[19px] border-b border-[#c4c4c4]"><div class="w-[21px] bg-linear-to-b from-[#fafafa] to-[#e8e8e8] border-r border-[#ccc] flex items-center justify-center text-[11px] font-['Liberation_Mono']">10</div><div class="w-[191px] text-[#888] border-r border-[#c4c4c4] flex items-center pl-[3px]"><span class="w-[12px] h-[12px] border border-[#999] flex items-center justify-center text-black text-[11px] font-['Liberation_Mono']">+</span><span class="ml-[5px]">其它属性</span></div><div class="w-[126px] border-r border-[#c4c4c4]"></div><div class="flex-1"></div></div>
            <div class="flex h-[19px] border-b border-[#c4c4c4]"><div class="w-[21px] bg-linear-to-b from-[#fafafa] to-[#e8e8e8] border-r border-[#ccc] flex items-center justify-center text-[11px] font-['Liberation_Mono']">22</div><div class="w-[191px] text-[#888] border-r border-[#c4c4c4] flex items-center pl-[3px]"><span class="w-[12px] h-[12px] border border-[#999] flex items-center justify-center text-black text-[11px] font-['Liberation_Mono']">+</span><span class="ml-[5px]">锚固搭接</span></div><div class="w-[126px] border-r border-[#c4c4c4]"></div><div class="flex-1"></div></div>
            <div class="flex h-[19px] border-b border-[#c4c4c4]"><div class="w-[21px] bg-linear-to-b from-[#fafafa] to-[#e8e8e8] border-r border-[#ccc] flex items-center justify-center text-[11px] font-['Liberation_Mono']">37</div><div class="w-[191px] text-[#888] border-r border-[#c4c4c4] flex items-center pl-[3px]"><span class="w-[12px] h-[12px] border border-[#999] flex items-center justify-center text-black text-[11px] font-['Liberation_Mono']">+</span><span class="ml-[5px]">显示样式</span></div><div class="w-[126px] border-r border-[#c4c4c4]"></div><div class="flex-1"></div></div>
          </div>
          <!-- grid scrollbar -->
          <div class="w-[17px] bg-[#f0f0f0] flex flex-col items-center">
            <svg class="mt-[8px] w-[9px] h-[6px]" viewBox="0 0 9 6"><path d="M1 5l3.500-4L8 5" fill="none" stroke="#666" stroke-width="1.500"/></svg>
            <div class="mt-[12px] w-full h-[338px] bg-[#cdcdcd]"></div>
            <svg class="mt-auto mb-[5px] w-[9px] h-[6px]" viewBox="0 0 9 6"><path d="M1 1l3.500 4L8 1" fill="none" stroke="#666" stroke-width="1.500"/></svg>
          </div>
        </div>
      </section>
    </div>
  </div>
</main>

<!-- status bar -->
<footer class="h-[21px] mt-[2px] flex gap-[3px] bg-[#f0f0f0] whitespace-nowrap">
  <div class="w-[147px] bg-linear-to-b from-white to-[#eee] border border-[#e4e4e4]"></div>
  <div class="w-[77px] bg-linear-to-b from-white to-[#eee] border border-[#e4e4e4] flex items-center pl-px">层高<i class="not-italic font-['Liberation_Mono'] text-[10px]">:3m</i></div>
  <div class="w-[97px] bg-linear-to-b from-white to-[#eee] border border-[#e4e4e4] flex items-center pl-px">底标高<i class="not-italic font-['Liberation_Mono'] text-[10px]">:8.95m</i></div>
  <div class="w-[47px] bg-linear-to-b from-white to-[#eee] border border-[#e4e4e4] flex items-center pl-px font-['Liberation_Mono'] text-[10px]">0</div>
  <div class="w-[914px] bg-linear-to-b from-white to-[#eee] border border-[#e4e4e4] flex items-center pl-px">名称在当前层当前构件类型下不允许重名</div>
  <div class="flex-1 bg-linear-to-b from-white to-[#eee] border border-[#e4e4e4] flex items-center pl-px font-['Liberation_Mono'] text-[10px]">519.3 FPS</div>
</footer>

<!-- windows taskbar -->
<div class="h-10 flex items-center bg-[#06101a] text-white whitespace-nowrap">
  <div class="w-12 h-10 bg-black flex items-center justify-center">
    <svg class="w-4 h-4" viewBox="0 0 16 16"><path d="M0 2.500l7-1v6H0zM8 1.300l8-1.200v7.400H8zM0 8.500h7v6l-7-1zM8 8.500h8v7.400l-8-1.200z" fill="#fff"/></svg>
  </div>
  <div class="w-[344px] h-10 bg-[#333] flex items-center">
    <span class="ml-[9px] w-[21px] h-[21px] rounded-full border-[3px] border-[#ddd]"></span>
    <span class="ml-[6px] text-[14px] text-[#888]">在这里输入你要搜索的内容</span>
    <svg class="ml-[104px] w-3 h-[18px]" viewBox="0 0 12 18"><rect x="3" y="1" width="6" height="10" rx="3" fill="none" stroke="#888"/><path d="M1 8c0 6 10 6 10 0M6 13v3M3 17h6" fill="none" stroke="#888"/></svg>
  </div>
  <svg class="ml-[13px] w-5 h-[18px]" viewBox="0 0 20 18"><path d="M5 1h10v16H5zM2 4H0v10h2M18 4h2v10h-2" fill="none" stroke="#fff"/></svg>
  <svg class="ml-[30px] w-[22px] h-[22px]" viewBox="0 0 22 22"><path d="M11 11C5 11 1 9 2 5s7-4 9 6zM11 11c0-6 2-10 6-9s4 7-6 9zM11 11c6 0 10 2 9 6s-7 4-9-6zM11 11c0 6-2 10-6 9s-4-7 6-9z" fill="#e4e4e4"/></svg>
  <svg class="ml-[30px] w-[22px] h-[24px]" viewBox="0 0 22 24"><path d="M4 13h14c0-5-3-8-7-8s-7 4-7 8.500 3 7.500 7 7.500c3 0 5-1 7-3" fill="none" stroke="#e8e8e8" stroke-width="3"/><path d="M20 2C16 1 6 6 2 16" fill="none" stroke="#e8e8e8"/></svg>
  <svg class="ml-[28px] w-[18px] h-[20px]" viewBox="0 0 18 20"><path d="M14 3C8 0 2 4 2 10s6 9 10 7 4-6 1-7-5 1-4 3" fill="none" stroke="#bbb" stroke-width="1.500"/></svg>
  <span class="ml-[24px] w-[2px] h-[20px] bg-[#333]"></span>
  <svg class="ml-[27px] w-[22px] h-[24px]" viewBox="0 0 22 24"><path d="M4 13h15c0-5-3-8-8-8S3 9 3 14s4 8 8 8c3 0 6-1 8-3" fill="none" stroke="#1a8fe8" stroke-width="4"/></svg>
  <svg class="ml-[20px] w-[24px] h-[26px]" viewBox="0 0 24 26"><path d="M6 13h14c0-5-3-7-7-7s-7 3-7 8 3 7 7 7c3 0 5-1 6-3" fill="none" stroke="#35a5e8" stroke-width="3.500"/><path d="M22 3C16 1 5 7 2 21c2 2 5 0 8-3" fill="none" stroke="#e8c43a" stroke-width="1.500"/></svg>
  <svg class="ml-[21px] w-[22px] h-[22px]" viewBox="0 0 22 22"><path d="M1 2h8l2 3h10v15H1z" fill="#f4d57a"/><path d="M7 14h8v7H7z" fill="#4aa3dc"/></svg>
  <div class="ml-[12px] w-[42px] h-10 bg-[#394347] border-b-2 border-[#76b9ed] flex items-center justify-center">
    <svg class="w-6 h-6" viewBox="0 0 24 24"><rect width="24" height="24" rx="4" fill="#0e96f2"/><path d="M12 4v12M6 10a3 3 0 0 0 0 6h12a3 3 0 0 0 0-6M12 16v4" fill="none" stroke="#fff" stroke-width="2"/></svg>
  </div>
  <div class="ml-[5px] w-[35px] h-10 border-b-2 border-[#76b9ed] flex items-center justify-center">
    <svg class="w-6 h-6" viewBox="0 0 24 24"><path d="M20 4C10-1 2 6 2 14s10 11 16 6 3-10-3-8-3 6 0 5" fill="none" stroke="#1a8fe8" stroke-width="4"/></svg>
  </div>
  <div class="ml-[8px] w-[34px] h-10 border-b-2 border-[#76b9ed] flex items-center justify-center">
    <svg class="w-6 h-6" viewBox="0 0 24 24"><rect width="24" height="24" rx="2" fill="#f09a1a"/><path d="M5 5h14v15H5z" fill="#f8e0a0"/><path d="M7 9h9M7 12h9M7 15h6" stroke="#a05a10"/></svg>
  </div>
  <div class="ml-[9px] w-[34px] h-10 border-b-2 border-[#76b9ed] flex items-center justify-center">
    <svg class="w-6 h-6" viewBox="0 0 24 24"><circle cx="12" cy="12" r="11" fill="#8ccf3a"/><circle cx="12" cy="12" r="6" fill="none" stroke="#fff" stroke-width="2"/><path d="M5 12h14" stroke="#fff" stroke-width="2"/></svg>
  </div>
  <span class="ml-[20px] w-[2px] h-[20px] bg-[#333]"></span>
  <span class="ml-[11px] text-[12px] text-[#ddd]">链接</span>
  <div class="ml-[19px] w-[48px] flex flex-col items-center gap-[6px] text-[#ddd] text-[12px]"><span>26%</span><span>CPU使用</span></div>
  <svg class="ml-[19px] w-3 h-[7px]" viewBox="0 0 12 7"><path d="M1 6l5-5 5 5" fill="none" stroke="#fff"/></svg>
  <svg class="ml-[11px] w-[16px] h-[14px]" viewBox="0 0 16 14"><path d="M3 4h11v8H3z" fill="none" stroke="#fff"/><path d="M5 6h5v4H5zM2 1h2v3H2zM5 1h1v3H5z" fill="#fff"/></svg>
  <svg class="ml-[12px] w-[14px] h-[14px]" viewBox="0 0 14 14"><path d="M1 13C1 6 6 1 13 1M4 13c0-5 4-9 9-9M7 13c0-3 3-6 6-6" fill="none" stroke="#ccc" stroke-dasharray="2 1"/></svg>
  <svg class="ml-[7px] w-[16px] h-[14px]" viewBox="0 0 16 14"><path d="M1 5h3l4-4v12L4 9H1zM10 4c2 2 2 4 0 6M12 2c3 3 3 7 0 10" fill="none" stroke="#fff"/></svg>
  <svg class="ml-[9px] w-[22px] h-[16px]" viewBox="0 0 22 16"><path d="M.5.5h21v15H.5z" fill="none" stroke="#fff"/><path d="M3 4h16M3 7h16M3 10h16M6 13h10" stroke="#fff" stroke-dasharray="1.500 1"/></svg>
  <span class="ml-[11px] text-[14px]">中</span>
  <svg class="ml-[7px] w-[16px] h-[18px]" viewBox="0 0 16 18"><path d="M2 2l12-1 1 15-12 1z" fill="#e8391e"/><path d="M11 5H6v3h4v4H5" fill="none" stroke="#fff" stroke-width="2"/></svg>
  <div class="ml-[15px] w-[56px] flex flex-col items-center gap-[8px] text-[#ddd] text-[13px]"><span>16:14</span><span>2018/5/2</span></div>
  <svg class="ml-[19px] w-[17px] h-[18px]" viewBox="0 0 17 18"><path d="M.5.500h16v13H11l-2.500 3.500L6 13.500H.5z" fill="none" stroke="#fff"/></svg>
</div>

<!-- floating: input method bar -->
<div class="absolute left-[703px] top-[2px] flex items-center">
  <div class="w-[26px] h-[26px] rounded-[5px] bg-[#f0451f] flex items-center justify-center rotate-[-6deg] z-10">
    <svg class="w-[18px] h-[20px]" viewBox="0 0 18 20"><path d="M15 4H5v5h9v7H2" fill="none" stroke="#fff" stroke-width="3.500"/></svg>
  </div>
  <div class="-ml-[2px] w-[183px] h-[24px] bg-[#f6f9fd] border border-[#b4cde6] flex items-center text-[#1a6fc4]">
    <span class="ml-[5px] text-[14px] font-bold">中</span>
    <span class="ml-[8px] text-[13px] font-bold">°,</span>
    <svg class="ml-[8px] w-[16px] h-[16px]" viewBox="0 0 16 16"><circle cx="8" cy="8" r="7" fill="none" stroke="#1a6fc4" stroke-width="1.500"/><path d="M5 5v2M11 5v2M4 10c2 3 6 3 8 0" fill="none" stroke="#1a6fc4" stroke-width="1.500"/></svg>
    <svg class="ml-[7px] w-[12px] h-[18px]" viewBox="0 0 12 18"><rect x="3" y="0" width="6" height="11" rx="3" fill="#1a6fc4"/><path d="M1 8c0 5 10 5 10 0M6 13v3M2 17h8" fill="none" stroke="#1a6fc4" stroke-width="1.500"/></svg>
    <svg class="ml-[8px] w-[16px] h-[14px]" viewBox="0 0 16 14"><rect width="16" height="14" rx="2" fill="#1a6fc4"/><path d="M3 4h10M3 7h10M5 10h6" stroke="#fff" stroke-dasharray="1.500 1"/></svg>
    <svg class="ml-[8px] w-[16px] h-[16px]" viewBox="0 0 16 16"><circle cx="6" cy="4" r="3" fill="#9fb4c8"/><path d="M1 14c0-6 10-6 10 0z" fill="#9fb4c8"/><path d="M8 8h8v6H8z" fill="#e4edf5" stroke="#9fb4c8"/></svg>
    <svg class="ml-[7px] w-[15px] h-[15px]" viewBox="0 0 15 15"><path d="M1 3l4-2c1 2 4 2 5 0l4 2-1 4-2-1v8H4V6L2 7z" fill="#1a6fc4"/></svg>
    <svg class="ml-[7px] w-[14px] h-[15px]" viewBox="0 0 14 15"><path d="M13 3l-3 3-2-2 3-3c-3-1-6 1-5 5L1 11c-1 2 1 4 3 3l5-5c4 1 6-2 4-6z" fill="#1a6fc4"/></svg>
  </div>
</div>

<!-- floating: update badge -->
<div class="absolute left-[965px] -top-[22px] w-[44px] h-[44px] rounded-full bg-[#43a84a] border-[3px] border-[#d8dcd8] flex items-end justify-center pb-[7px] text-white text-[11px] font-bold font-['Liberation_Sans',sans-serif]">57</div>

<!-- floating: section editor window -->
<div class="absolute left-[722px] top-[132px] w-[621px] h-[571px] border border-[#444] bg-linear-to-b from-[#9dbcdc] via-[#b9d1ea] to-[#b9d1ea] flex flex-col px-[7px]">
  <div class="h-[30px] flex items-center pt-[7px] text-[12px] text-[#111]">截面编辑</div>
  <div class="h-[512px] bg-[#f0f0f0] flex flex-col">
    <div class="h-[21px] flex items-end pl-[2px]">
      <div class="w-[30px] h-[19px] bg-[#f0f0f0] border border-b-0 border-[#ccc] flex items-center justify-center">截面</div>
      <div class="ml-[17px] w-[50px] h-[21px] bg-white flex items-center justify-center pb-[3px]">配筋</div>
    </div>
    <div class="flex-1 bg-white/70 border border-[#ddd] px-[4px] pt-[2px] flex flex-col">
      <div class="h-[28px] bg-[#f5f5f5] flex items-center">
        <span class="ml-[3px] h-[14px] border-l-2 border-dotted border-[#aaa]"></span>
        <span class="ml-[7px]">布角筋</span><span class="ml-[10px]">布边筋</span><span class="ml-[10px]">特殊布筋</span><span class="ml-[10px]">对齐钢筋</span><span class="ml-[10px]">画箍筋</span>
        <span class="ml-[9px] w-px h-[16px] bg-[#bbb]"></span>
        <span class="ml-[6px]">修改纵筋</span><span class="ml-[10px]">修改箍筋</span><span class="ml-[10px]">编辑弯钩</span><span class="ml-[9px]">端头伸缩</span><span class="ml-[11px] text-[#999]">删除</span>
      </div>
      <div class="h-[28px] bg-[#f2f2f2] flex items-center">
        <span class="ml-[3px] h-[14px] border-l-2 border-dotted border-[#aaa]"></span>
        <span class="ml-[6px] text-[#888]">钢筋信息</span>
        <div class="ml-[2px] w-[133px] h-[22px] border border-[#777] flex items-center pl-[1px] text-[#888]"><span class="font-['Liberation_Sans',sans-serif]">C6@100</span><span class="ml-auto mr-[4px] w-0 h-0 border-x-[3px] border-x-transparent border-t-[3px] border-t-[#555]"></span></div>
      </div>
      <!-- drawing canvas -->
      <div class="w-[597px] h-[425px] mt-px border-2 border-[#ff0000] bg-black overflow-hidden">
        <svg class="block" width="593" height="421" viewBox="737 246 593 421">
          <path d="M746.500 246v421m13.680-421v421m13.680-421v421m13.680-421v421m13.680-421v421m13.680-421v421m13.680-421v421m13.680-421v421m13.680-421v421m13.680-421v421m13.680-421v421m13.680-421v421m13.680-421v421m13.680-421v421m13.680-421v421m13.680-421v421m13.680-421v421m13.680-421v421m13.680-421v421m13.680-421v421m13.680-421v421m13.680-421v421m13.680-421v421m13.680-421v421m13.680-421v421m13.680-421v421m13.680-421v421m13.680-421v421m13.680-421v421m13.680-421v421m13.680-421v421m13.680-421v421" fill="none" stroke="#3c3c3c" stroke-dasharray="9 4"/>
          <path d="M738 247.500h453M738 428.500h453M738 610.500h453" fill="none" stroke="#4c4c4c" stroke-dasharray="9 3 2 3"/>
          <path d="M951.500 246v421" fill="none" stroke="#777" stroke-dasharray="9 3 2 3"/>
          <g font-family="Liberation Serif, serif" font-size="12" fill="#4a4a4a" text-anchor="middle">
            <text x="751" y="437">-450</text><text x="820" y="437">-300</text><text x="889" y="437">-150</text><text x="956" y="437">0</text><text x="1026" y="437">150</text><text x="1093" y="437">300</text><text x="1161" y="437">450</text>
          </g>
          <path d="M977 291L1024 245" stroke="#fff" fill="none"/>
          <path d="M926 291h51v274h-37V383h-14z" fill="none" stroke="#fff" stroke-width="2"/>
          <g fill="none" stroke="#00f000" stroke-width="2">
            <path d="M926 273h51M926 260v27M977 260v27M918 283l20-18M967 283l19-18"/>
            <path d="M908 291v92M895 291h27M895 383h27M900 283l19 19M900 373l19 19"/>
            <path d="M922 383v182M926 383v28M940 383v30M926 401h14M912 373l24 27M918 411l18-19M930 411l21-19"/>
            <path d="M995 291v274M981 291h27M985 283l19 19M908 565h27M912 555l20 19M981 565h27M985 555l19 19"/>
            <path d="M940 583h37M940 569v28M977 569v28M930 593l21-20M967 593l19-20"/>
          </g>
          <g fill="none" stroke="#ff0000" stroke-width="3">
            <path d="M976 392l-24-25h120l-25 25"/>
            <path d="M976 438l-24-25h120l-25 24 25 24H960l24.500-24"/>
            <path d="M984.500 482L960 506h112l-25-24"/>
            <path d="M984.500 528L960 552h112l-25-24"/>
          </g>
          <g font-family="Liberation Serif, serif" font-size="19" fill="#fff" text-anchor="middle">
            <text x="951" y="262">110</text><text x="890" y="344">200</text><text x="933" y="427">30</text><text x="1013" y="435">600</text><text x="904" y="481">400</text><text x="958" y="608">80</text>
          </g>
          <text x="1028" y="251" font-size="15" fill="#fff">箍筋</text>
          <text x="1071" y="251" font-size="15" fill="#00d000" font-family="Liberation Sans, sans-serif">C6@100</text>
        </svg>
      </div>
      <div class="mt-[6px] -mx-[4px] h-[20px] flex gap-[3px]">
        <div class="w-[147px] bg-linear-to-b from-white to-[#eee] border border-[#e4e4e4] flex items-center pl-[7px] text-[10px] font-['Liberation_Mono']">(X: 601 Y: 401)</div>
        <div class="flex-1 bg-linear-to-b from-white to-[#eee] border border-[#e4e4e4]"></div>
      </div>
    </div>
  </div>
</div>

</body>
</html>
